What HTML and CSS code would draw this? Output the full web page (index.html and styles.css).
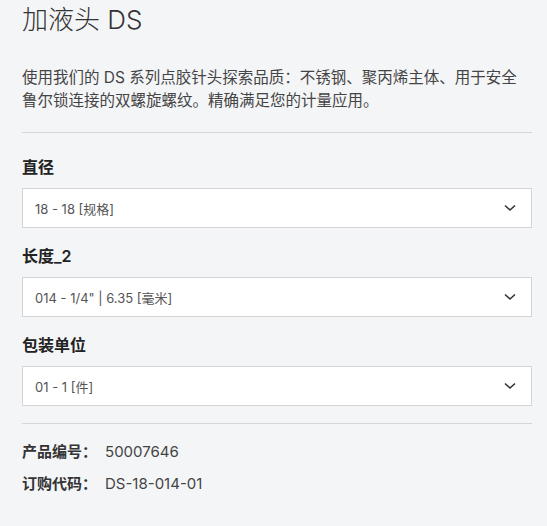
FILE: index.html
```html
<!DOCTYPE html>
<html lang="zh-CN">
<head>
<meta charset="utf-8">
<link rel="stylesheet" href="styles.css">
</head>
<body>
<main class="product">
  <h1 class="title">加液头 DS</h1>
  <p class="desc">使用我们的 DS 系列点胶针头探索品质：不锈钢、聚丙烯主体、用于安全鲁尔锁连接的双螺旋螺纹。精确满足您的计量应用。</p>
  <hr class="rule">
  <div class="field">
    <div class="label">直径</div>
    <div class="select"><span>18 - 18 [规格]</span><svg class="chev" width="12" height="8" viewBox="0 0 12 8"><path d="M1 1.5 L6 6 L11 1.5" fill="none" stroke="#333" stroke-width="1.6"/></svg></div>
  </div>
  <div class="field">
    <div class="label">长度_2</div>
    <div class="select"><span>014 - 1/4" | 6.35 [毫米]</span><svg class="chev" width="12" height="8" viewBox="0 0 12 8"><path d="M1 1.5 L6 6 L11 1.5" fill="none" stroke="#333" stroke-width="1.6"/></svg></div>
  </div>
  <div class="field">
    <div class="label">包装单位</div>
    <div class="select"><span>01 - 1 [件]</span><svg class="chev" width="12" height="8" viewBox="0 0 12 8"><path d="M1 1.5 L6 6 L11 1.5" fill="none" stroke="#333" stroke-width="1.6"/></svg></div>
  </div>
  <hr class="rule rule-bottom">
  <div class="info">
    <div class="row"><span class="key">产品编号：</span><span class="val">50007646</span></div>
    <div class="row"><span class="key">订购代码：</span><span class="val">DS-18-014-01</span></div>
  </div>
</main>
</body>
</html>
```
FILE: styles.css
```css
html, body {
  margin: 0;
  padding: 0;
  background: #f4f5f7;
}
body {
  font-family: Inter, "Noto Sans CJK SC", sans-serif;
  color: #333;
}
.product {
  width: 510px;
  padding: 2px 0 0 22px;
}
.title {
  margin: 0;
  font-size: 26px;
  font-weight: 300;
  line-height: 36px;
  color: #333;
}
.desc {
  margin: 29px 0 0;
  font-size: 15.5px;
  line-height: 22.5px;
  color: #444;
}
.rule {
  border: 0;
  border-top: 1px solid #d6d6d8;
  margin: 20px 0 0;
}
.field {
  display: flex;
  flex-direction: column;
}
.label {
  font-size: 16px;
  font-weight: 600;
  color: #222;
  line-height: 24px;
  margin-top: 16px;
  margin-bottom: 9px;
}
.rule + .field .label {
  margin-top: 22px;
}
.select {
  height: 40px;
  box-sizing: border-box;
  background: #fff;
  border: 1px solid #d4d4d6;
  display: flex;
  align-items: center;
  justify-content: space-between;
  padding: 0 15px 0 12px;
  font-size: 13px;
  color: #555;
}
.rule-bottom {
  margin-top: 17px;
}
.info {
  padding-top: 12px;
  display: flex;
  flex-direction: column;
}
.row {
  line-height: 32px;
  font-size: 15px;
}
.key {
  font-weight: 600;
  color: #333;
}
.val {
  color: #444;
  margin-left: 8px;
}
```
